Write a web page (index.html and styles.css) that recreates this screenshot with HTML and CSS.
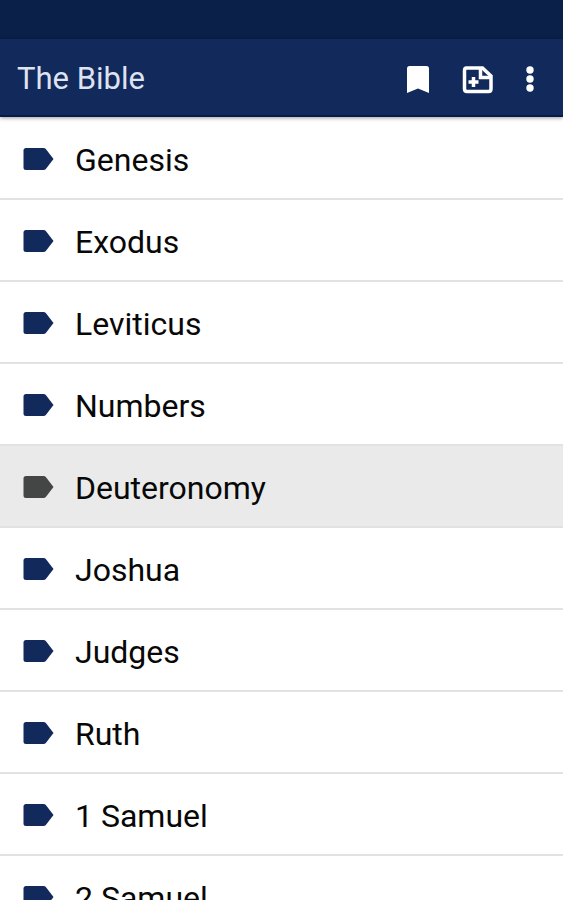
FILE: index.html
```
<!DOCTYPE html>
<html lang="en">
<head>
    <meta charset="UTF-8">
    <meta name="viewport" content="width=device-width, initial-scale=1.0">
    <title>The Bible</title>
    <link rel="stylesheet" href="styles.css">
</head>
<body>

    <svg class="sprite" aria-hidden="true">
        <symbol id="label" viewBox="0 0 32 24">
            <path d="M4 0H21.500Q23 0 24 1.200L31.500 11L24 20.800Q23 22 21.500 22H4Q1.500 22 1.500 19.500V2.500Q1.500 0 4 0Z"/>
        </symbol>
    </svg>

    <div class="statusbar"></div>

    <header class="toolbar">
        <h1>The Bible</h1>
        <button class="action" aria-label="Bookmarks">
            <svg width="32" height="32" viewBox="0 0 32 32">
                <path d="M7.500 3H24.500Q27 3 27 5.500V30L16 25.500L5 30V5.500Q5 3 7.500 3Z"/>
            </svg>
        </button>
        <button class="action" aria-label="Add note">
            <svg width="32" height="32" viewBox="0 0 32 32">
                <path class="line" d="M4.500 5H20.500L29 13V26Q29 28.500 26.500 28.500H5Q2.500 28.500 2.500 26V7.500Q2.500 5 4.500 5Z"/>
                <path class="line" d="M18.500 5.500V14.500H28.500"/>
                <path class="line" d="M11.500 14V24M6.500 19H16.500"/>
            </svg>
        </button>
        <button class="action more" aria-label="More options">
            <svg width="32" height="32" viewBox="0 0 32 32">
                <circle cx="16" cy="7" r="3.700"/>
                <circle cx="16" cy="16" r="3.700"/>
                <circle cx="16" cy="25" r="3.700"/>
            </svg>
        </button>
    </header>

    <main class="books">
        <a class="book" href="#"><svg class="tag"><use href="#label"/></svg>Genesis</a>
        <a class="book" href="#"><svg class="tag"><use href="#label"/></svg>Exodus</a>
        <a class="book" href="#"><svg class="tag"><use href="#label"/></svg>Leviticus</a>
        <a class="book" href="#"><svg class="tag"><use href="#label"/></svg>Numbers</a>
        <a class="book selected" href="#"><svg class="tag"><use href="#label"/></svg>Deuteronomy</a>
        <a class="book" href="#"><svg class="tag"><use href="#label"/></svg>Joshua</a>
        <a class="book" href="#"><svg class="tag"><use href="#label"/></svg>Judges</a>
        <a class="book" href="#"><svg class="tag"><use href="#label"/></svg>Ruth</a>
        <a class="book" href="#"><svg class="tag"><use href="#label"/></svg>1 Samuel</a>
        <a class="book" href="#"><svg class="tag"><use href="#label"/></svg>2 Samuel</a>
    </main>

</body>
</html>
```
FILE: styles.css
```
*{
    box-sizing: border-box;
}

body{
    display: flex;
    flex-direction: column;
    height: 100vh;
    margin: 0;
    overflow: hidden;
    background-color: white;
    font-family: Roboto, "Liberation Sans", sans-serif;
}

.sprite{
    display: none;
}

.statusbar{
    flex: none;
    height: 39px;
    background-color: #0a2049;
}

.toolbar{
    display: flex;
    flex: none;
    align-items: center;
    height: 78px;
    padding: 3px 17px 0;
    background-color: #12295b;
    border-bottom: 2px solid #081a4a;
    box-shadow: 0 1px 4px rgba(0, 0, 0, 0.4);
    z-index: 1;
}

h1{
    flex: 1;
    margin: 0;
    color: #dfe3f0;
    font-size: 31px;
    font-weight: 400;
}

.action{
    width: 32px;
    height: 32px;
    margin-left: 28px;
    padding: 0;
    border: 0;
    background: none;
    fill: white;
}

.action svg{
    display: block;
}

.more{
    margin-left: 20px;
}

.line{
    fill: none;
    stroke: white;
    stroke-width: 3.5;
}

.books{
    flex: 1;
    min-height: 0;
    padding-top: 1px;
    overflow: hidden;
}

.book{
    display: flex;
    align-items: center;
    gap: 21px;
    height: 82px;
    padding: 4px 22px 0;
    border-bottom: 2px solid #e2e2e2;
    color: #080808;
    font-size: 32px;
    font-weight: 400;
    text-decoration: none;
}

.tag{
    width: 32px;
    height: 24px;
    fill: #12295b;
}

.selected{
    background-color: #eaeaea;
}

.selected .tag{
    fill: #444545;
}
```
